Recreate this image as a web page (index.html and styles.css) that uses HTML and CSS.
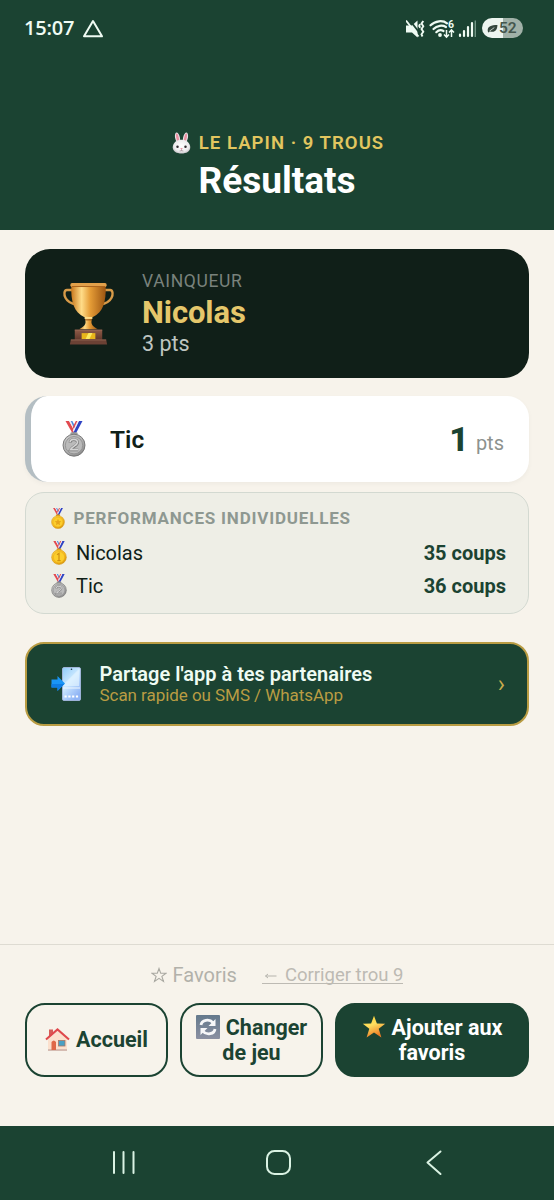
FILE: index.html
```html
<!DOCTYPE html>
<html lang="fr">
<head>
<meta charset="utf-8">
<title>Résultats</title>
<link rel="stylesheet" href="styles.css">
</head>
<body>
<svg class="defs" width="0" height="0" aria-hidden="true">
  <defs>
    <linearGradient id="cup" x1="0" x2="1"><stop offset="0" stop-color="#c9781d"/><stop offset=".3" stop-color="#ffdc88"/><stop offset=".55" stop-color="#e59c36"/><stop offset="1" stop-color="#9c5512"/></linearGradient>
    <linearGradient id="wood" x1="0" x2="0" y1="0" y2="1"><stop offset="0" stop-color="#8e5b48"/><stop offset="1" stop-color="#5d3529"/></linearGradient>
    <radialGradient id="goldDisc" cx=".4" cy=".35" r=".75"><stop offset="0" stop-color="#ffe45c"/><stop offset=".65" stop-color="#f6b91a"/><stop offset="1" stop-color="#c98508"/></radialGradient>
    <radialGradient id="silverDisc" cx=".4" cy=".35" r=".75"><stop offset="0" stop-color="#dcdcdc"/><stop offset=".65" stop-color="#b0b0b0"/><stop offset="1" stop-color="#777"/></radialGradient>
    <linearGradient id="screen" x1="0" x2=".6" y1="0" y2="1"><stop offset="0" stop-color="#8ecbf8"/><stop offset=".5" stop-color="#cde9ff"/><stop offset="1" stop-color="#8fb4f5"/></linearGradient>
    <linearGradient id="slate" x1="0" x2="0" y1="0" y2="1"><stop offset="0" stop-color="#64798c"/><stop offset="1" stop-color="#8b90a2"/></linearGradient>
    <linearGradient id="starFill" x1="0" x2=".4" y1="0" y2="1"><stop offset="0" stop-color="#ffd02c"/><stop offset=".5" stop-color="#ffe060"/><stop offset="1" stop-color="#ee7d25"/></linearGradient>
    <radialGradient id="fur" cx=".5" cy=".45" r=".6"><stop offset="0" stop-color="#fff"/><stop offset=".7" stop-color="#ecebed"/><stop offset="1" stop-color="#bcb8bd"/></radialGradient>
    <symbol id="ribbon" viewBox="0 0 24 36">
      <path d="M3.500 0h3.600l6.600 12h-3.400z" fill="#e24a50"/><path d="M7.100 0h1.700l5.800 11h-1.600z" fill="#f3eef5"/><path d="M8.800 0h1.600l4.500 9-1.200 2z" fill="#4b8ae0"/>
      <path d="M20.500 0h-3.600l-6 12h3.200z" fill="#2f43c4"/><path d="M16.900 0h-1.500l-4.600 9.400.9 1.600z" fill="#f3eef5"/><path d="M15.400 0h-1.600l-3 6 .8 2z" fill="#e24a50"/>
    </symbol>
    <symbol id="medalSilver" viewBox="0 0 24 36">
      <use href="#ribbon" width="24" height="36"/><rect x="8.500" y="11.200" width="7" height="3" rx="1" fill="#9a9a9a"/>
      <circle cx="12" cy="24.200" r="11" fill="url(#silverDisc)" stroke="#747474" stroke-width=".9"/><circle cx="12" cy="24.200" r="8.700" fill="#bababa" stroke="#8b8b8b" stroke-width=".8"/>
      <path d="M8 21.600c.3-4 7.700-3.900 7.500.1-.1 3.100-5.300 3.900-7.100 7.200h7.800" fill="none" stroke="#777" stroke-width="2.800"/><path d="M8 21.300c.3-4 7.700-3.900 7.500.1-.1 3.100-5.300 3.900-7.100 7.200h7.800" fill="none" stroke="#d4d4d4" stroke-width="1.600"/>
    </symbol>
    <symbol id="medalGold" viewBox="0 0 24 36">
      <use href="#ribbon" width="24" height="36"/><rect x="8.500" y="11.200" width="7" height="3" rx="1" fill="#dca21a"/>
      <circle cx="12" cy="24.200" r="11" fill="url(#goldDisc)" stroke="#d79a16" stroke-width=".9"/><circle cx="12" cy="24.200" r="8.500" fill="#fcce2c" stroke="#e6a518" stroke-width=".8"/>
      <path d="M9 20.500l3-2V29M9.500 29.500h5" fill="none" stroke="#cf9012" stroke-width="1.800"/>
    </symbol>
    <symbol id="medalSport" viewBox="0 0 24 36">
      <use href="#ribbon" width="24" height="36"/><rect x="8.500" y="11.200" width="7" height="3" rx="1" fill="#dca21a"/>
      <circle cx="12" cy="24.200" r="11" fill="url(#goldDisc)" stroke="#d79a16" stroke-width=".9"/><circle cx="12" cy="24.200" r="8.500" fill="#fcce2c" stroke="#e6a518" stroke-width=".8"/>
      <path d="M12 18.500l1.700 3.700 4 .5-3 2.700.8 4-3.500-2-3.500 2 .8-4-3-2.700 4-.5z" fill="#e7a51a"/>
    </symbol>
  </defs>
</svg>

<header class="header">
  <div class="status">
    <span class="status-time">15:07</span>
    <svg class="status-triangle" viewBox="0 0 22 20" width="22" height="20"><path d="M11 2L20 17.300H2z" fill="none" stroke="#effbf3" stroke-width="2" stroke-linejoin="round"/></svg>
    <span class="status-gap"></span>
    <svg class="status-icons" viewBox="0 0 70 22" width="70" height="22" fill="none" stroke="#effbf3">
      <path d="M0 7.500H6L11.500 2.500v17l-5.500-5H0z" fill="#effbf3" stroke="none"/><path d="M2 0L14 15.500" stroke="#1b4332" stroke-width="1.800"/><path d="M0 2.500L12.500 18.500" stroke-width="1.900"/>
      <path d="M17.300 3l-1.800 2.600 1.800 2.700-1.800 2.700 1.800 2.700-1.800 2.600 1 2.200M14 6l-.8 2 1 1.800" stroke-width="1.900"/>
      <path d="M24.500 7.300C29 2.600 37 2 41 5.300M27.500 11C31 7.300 36.500 6.900 40 9M30.300 14.200C32.500 12 35.500 11.800 37.500 13" stroke-width="2.200" stroke-linecap="round"/><circle cx="34" cy="17" r="1.900" fill="#effbf3" stroke="none"/>
      <path d="M40.500 12v7M38 16.500l2.500 2.700 2.500-2.700M45.500 19v-7M43 14.500l2.500-2.700 2.500 2.700" stroke-width="1.500"/>
      <g stroke-width="2.200" stroke-linecap="round"><path d="M54 18v-1.500M58 18v-5M62 18V9M66 18V5"/></g><path d="M69.300 19V2.500" stroke="#6f9483" stroke-width="1.400"/>
      <text x="42" y="9.500" class="wifi-six">6</text>
    </svg>
    <div class="battery">
      <svg viewBox="0 0 12 10" width="11" height="9"><path d="M1 9C-.5 3.500 3 1 11.500 1c-.2 6-3 8.600-8 7.200L1.500 9.500z" fill="#34463d"/><path d="M2.500 8L8 4" stroke="#dfe7e2" stroke-width=".9"/></svg>
      <span>52</span>
    </div>
  </div>
  <div class="eyebrow">
    <svg viewBox="0 0 20 23" width="19" height="22">
      <ellipse cx="5.800" cy="6" rx="2.500" ry="5.700" transform="rotate(-12 5.800 6)" fill="#e8e3e7"/><ellipse cx="14.200" cy="6" rx="2.500" ry="5.700" transform="rotate(12 14.200 6)" fill="#e8e3e7"/>
      <ellipse cx="5.800" cy="6" rx="1.300" ry="4.500" transform="rotate(-12 5.800 6)" fill="#ea8fa0"/><ellipse cx="14.200" cy="6" rx="1.300" ry="4.500" transform="rotate(12 14.200 6)" fill="#ea8fa0"/>
      <path d="M10 8c5.500 0 8 2.700 9 6.500 1.200 5-3 8-9 8s-10.200-3-9-8c1-3.800 3.500-6.500 9-6.500z" fill="url(#fur)"/>
      <circle cx="5.800" cy="15.500" r="1.300" fill="#302b30"/><circle cx="14.200" cy="15.500" r="1.300" fill="#302b30"/><path d="M8.700 17h2.600L10 18.500z" fill="#e6748b"/><path d="M10 18.500v1M8 20q2-.8 4 0" stroke="#927c84" stroke-width=".7" fill="none"/>
    </svg>
    <span>LE LAPIN · 9 TROUS</span>
  </div>
  <h1 class="title">Résultats</h1>
</header>

<main class="content">
  <section class="winner">
    <svg class="trophy" viewBox="0 0 52 64" width="51" height="63">
      <path d="M11 8H4C.8 8 1 13 2.500 16c2.500 5 7.500 6.300 11.500 7M41 8h7C51.200 8 51 13 49.500 16c-2.500 5-7.500 6.300-11.500 7" fill="none" stroke="#d79a48" stroke-width="2.400"/>
      <path d="M8.500 3h35c.8 17-3 28.500-13 32.500h-9C11.500 31.500 7.700 20 8.500 3z" fill="url(#cup)"/>
      <path d="M22.500 35h7l-.5 6c.3 3.500 3 5 6.500 7h-19c3.500-2 6.200-3.500 6.500-7z" fill="url(#cup)"/><path d="M22 36.500h8" stroke="#ffdc88" stroke-width="2"/><path d="M22.500 38.500h7" stroke="#8f4e13" stroke-width="1"/>
      <rect x="7.500" y="1" width="37" height="4" rx="1.700" fill="#e2a04a"/><path d="M9 4.500h34" stroke="#a9621d" stroke-width="1"/>
      <path d="M12 48.500h28v11H12z" fill="url(#wood)"/><path d="M8 58.500h36l1 5H7z" fill="#6b4134"/><path d="M8 59h36M12 49h28" stroke="#9a6a58" stroke-width=".8"/><rect x="19" y="52" width="14" height="6" fill="#e8b51a"/><path d="M23 58l3-6h4l-3 6z" fill="#fbe85e"/>
    </svg>
    <div>
      <div class="winner-label">VAINQUEUR</div>
      <div class="winner-name">Nicolas</div>
      <div class="winner-points">3 pts</div>
    </div>
  </section>

  <section class="rank">
    <svg width="24" height="36"><use href="#medalSilver"/></svg>
    <span class="rank-name">Tic</span>
    <span class="rank-score">1</span>
    <span class="rank-unit">pts</span>
  </section>

  <section class="scores">
    <div class="scores-title"><svg width="14" height="21"><use href="#medalSport"/></svg><span>PERFORMANCES INDIVIDUELLES</span></div>
    <div class="score-row"><svg width="16" height="24"><use href="#medalGold"/></svg><span>Nicolas</span><strong>35 coups</strong></div>
    <div class="score-row"><svg width="16" height="24"><use href="#medalSilver"/></svg><span>Tic</span><strong>36 coups</strong></div>
  </section>

  <section class="share">
    <svg class="share-icon" viewBox="0 0 30 34" width="30" height="34">
      <rect x="11.500" y=".5" width="18" height="33" rx="1.500" fill="url(#screen)" stroke="#aebfe9" stroke-width=".8"/><path d="M12 18L28 2v17H12z" fill="#e3f4ff" opacity=".65"/><path d="M12 21h17" stroke="#eef7ff"/><circle cx="20.500" cy="2.300" r=".8" fill="#234"/>
      <path d="M13.500 29.500h14" stroke="#fff" stroke-width="2.200" stroke-dasharray="2.200 1.600"/><path d="M.5 12.500h6v-3.500l7.500 7.500-7.500 7.500v-3.500h-6z" fill="#1a95f5"/><path d="M.5 17h12.800L6.500 24v-3.500H.5z" fill="#0f7ce2"/>
    </svg>
    <div>
      <div class="share-title">Partage l'app à tes partenaires</div>
      <div class="share-text">Scan rapide ou SMS / WhatsApp</div>
    </div>
    <span class="share-arrow">›</span>
  </section>
</main>

<footer class="actions">
  <div class="links">
    <span class="favorites"><svg viewBox="0 0 16 16" width="16" height="16"><path d="M8 1.500l1.700 4.800h5.300L10.900 9.400l1.600 5.100L8 11.400l-4.500 3.100 1.600-5.100L1 6.300h5.300z" fill="none" stroke="#aaa9a2" stroke-width="1.100"/></svg><span>Favoris</span></span>
    <a class="correct"><svg viewBox="0 0 16 8" width="16" height="8"><path d="M3.500 5H14.500M6 3L3.500 5 6 7" fill="none" stroke="#b5b3ac"/></svg><span>Corriger trou 9</span></a>
  </div>
  <div class="buttons">
    <button class="button">
      <svg viewBox="0 0 25 25" width="25" height="25"><path d="M3 12L12.500 4 22 12v12H3z" fill="#fbe0cd"/><path d="M3 22h19v2H3z" fill="#d5bbb1"/><path d="M4 2.500h4v5L4 10z" fill="#d55b56"/><path d="M1 12.500L12.500 2.500 24 12.500" fill="none" stroke="#df484c" stroke-width="2.100"/><path d="M6.500 23v-8q2.250-3 4.500 0v8z" fill="#df6848"/><rect x="13.500" y="13.500" width="6.500" height="5.500" fill="#49a0c4" stroke="#a97764" stroke-width=".8"/></svg>
      <span>Accueil</span>
    </button>
    <button class="button stacked">
      <span class="line"><svg viewBox="0 0 24 24" width="24" height="24"><rect width="24" height="24" rx="1" fill="url(#slate)"/><path d="M5 10C5.500 4.800 13.500 3.600 17 7.700M19 14C18.500 19.200 10.500 20.400 7 16.300" fill="none" stroke="#f7f7f9" stroke-width="2.800"/><path d="M19.500 4v7h-7zM4.500 20v-7h7z" fill="#f7f7f9"/></svg><span>Changer</span></span>
      <span>de jeu</span>
    </button>
    <button class="button stacked filled">
      <span class="line"><svg viewBox="0 0 24 24" width="24" height="24"><path d="M12 .8l2.900 7.600 8.300.4-6.500 5 2.700 8.700-7.400-5-7.400 5 2.700-8.700-6.500-5 8.300-.4z" fill="url(#starFill)"/></svg><span>Ajouter aux</span></span>
      <span>favoris</span>
    </button>
  </div>
</footer>

<nav class="nav">
  <svg viewBox="0 0 554 74" width="554" height="74" fill="none" stroke="#daf2e3" stroke-width="2" stroke-linecap="round" stroke-linejoin="round"><path d="M114 26v21M123.500 26v21M133.500 26v21"/><rect x="267" y="25" width="23" height="23" rx="7.500"/><path d="M440.500 25.500L427.500 36.500l13 11.500"/></svg>
</nav>
</body>
</html>
```

FILE: styles.css
```css
* { box-sizing: border-box; }
body { margin: 0; width: 554px; height: 1200px; display: flex; flex-direction: column; overflow: hidden; background: #f7f3eb; color: #101f18; font-family: Roboto, "Liberation Sans", sans-serif; }
svg { display: block; flex: none; }
.defs { position: absolute; }

.header { height: 230px; flex: none; background: #1b4332; }
.status { height: 57px; padding: 0 31px 0 24px; display: flex; align-items: center; color: #effbf3; }
.status-time { font: 600 20px/24px "Open Sans", sans-serif; letter-spacing: -.2px; margin-top: -1px; }
.status-triangle { margin-left: 8px; }
.status-gap { flex: 1; }
.wifi-six { font: 700 10.500px Roboto, sans-serif; fill: #effbf3; stroke: none; }
.battery { width: 41px; height: 20px; margin: -1px 0 0 6px; border-radius: 10px; display: flex; align-items: center; padding-left: 5px; gap: 1px; background: linear-gradient(90deg, #edf5f0 0 21px, #a1b1a8 21px); color: #45564d; font: 600 15.500px/20px Roboto, sans-serif; }
.eyebrow { margin-top: 75px; height: 22px; display: flex; justify-content: center; align-items: center; gap: 8px; padding-left: 2px; color: #e2c65f; font-size: 18.500px; font-weight: 600; letter-spacing: 1.050px; }
.title { margin: 5px 0 0; text-align: center; color: #fff; font-size: 37px; line-height: 44px; font-weight: 700; }

.content { flex: 1; padding: 19px 25px 0; }
.winner { height: 129px; padding-left: 38px; border-radius: 25px; background: #101f18; display: flex; align-items: center; gap: 28px; }
.winner-label { font-size: 17.500px; line-height: 22px; letter-spacing: .65px; color: #79827c; margin-top: -1px; }
.winner-name { font-size: 31px; line-height: 36px; font-weight: 700; color: #e5c76b; margin-top: 3px; letter-spacing: -.1px; }
.winner-points { font-size: 21.500px; line-height: 26px; color: #bfc5c1; }
.rank { height: 86px; margin-top: 18px; padding: 0 25px 0 31px; border-left: 6px solid #b4bec3; border-radius: 22px; background: #fff; display: flex; align-items: center; box-shadow: 0 2px 5px rgba(20, 30, 20, .04); }
.rank-name { margin-left: 24px; font-size: 24.500px; font-weight: 600; flex: 1; }
.rank-score { font-size: 34px; font-weight: 800; color: #1b4332; }
.rank-unit { margin: 8px 0 0 7px; font-size: 20px; color: #8d928e; }
.scores { height: 122px; margin-top: 10px; padding: 14px 22px 0 25px; border: 1.500px solid #d3d9d1; border-radius: 19px; background: #eeeee6; }
.scores-title { height: 22px; display: flex; align-items: center; gap: 8.500px; color: #8e9891; font-size: 17px; font-weight: 700; letter-spacing: .8px; }
.score-row { height: 33px; display: flex; align-items: center; gap: 9px; font-size: 20px; }
.scores-title + .score-row { margin-top: 7px; }
.score-row strong { margin-left: auto; color: #1b4332; font-weight: 700; }
.share { height: 84px; margin-top: 28px; padding: 0 22px 0 24px; border: 2px solid #b99c43; border-radius: 19px; background: #1b4332; display: flex; align-items: center; gap: 18.500px; }
.share-title { color: #effbf3; font-size: 20px; line-height: 23px; font-weight: 600; }
.share-text { color: #b99c43; font-size: 17px; line-height: 20px; margin-top: -1px; letter-spacing: -.05px; }
.share-arrow { margin-left: auto; color: #c9ac4c; font-size: 24px; line-height: 28px; }

.actions { height: 182px; flex: none; border-top: 1px solid #dedbd2; padding: 18px 25px 0; }
.links { height: 24px; display: flex; align-items: center; justify-content: center; gap: 25px; color: #b2b1aa; font-size: 20px; }
.favorites { display: flex; align-items: center; gap: 6px; }
.correct { display: flex; align-items: center; gap: 7px; height: 18px; border-bottom: 1px solid #bdbab3; color: #bdbab3; font-size: 18.500px; }
.buttons { margin-top: 16px; display: grid; grid-template-columns: 143px 143px 194px; gap: 12px; }
.button { height: 74px; padding: 0 0 1px; border: 2px solid #1b4332; border-radius: 20px; background: transparent; color: #1b4332; display: flex; align-items: center; justify-content: center; gap: 6px; font: 700 21.500px/25px Roboto, sans-serif; white-space: nowrap; }
.stacked { flex-direction: column; gap: 0; }
.line { display: flex; align-items: center; gap: 6px; }
.filled { background: #1b4332; color: #fff; }
.nav { height: 74px; flex: none; background: #1b4332; }
```
